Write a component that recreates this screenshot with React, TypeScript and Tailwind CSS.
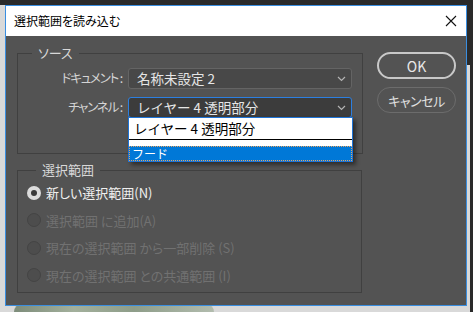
const jp = "font-['Noto_Sans_CJK_JP','Noto_Sans',sans-serif]";
const palt = "[font-feature-settings:'palt']";

function Chevron() {
  return (
    <svg width="9" height="6" viewBox="0 0 9 6" fill="none">
      <path d="M1 1l3.5 3.5L8 1" stroke="#b4b4b4" strokeWidth="1.2" />
    </svg>
  );
}

function Select({ value, focused }: { value: string; focused?: boolean }) {
  return (
    <div
      className={`flex h-[21px] w-[224px] items-center justify-between rounded-[3px] border pl-[8px] pr-[5px] ${
        focused ? 'border-[#2c7fe0] bg-[#3c3c3c]' : 'border-[#646464] bg-[#484848]'
      }`}
    >
      <span className="text-[13.5px] leading-none text-[#e6e6e6]">{value}</span>
      <Chevron />
    </div>
  );
}

function Radio({ label, checked, disabled }: { label: string; checked?: boolean; disabled?: boolean }) {
  return (
    <div className="flex h-[27.5px] items-center gap-[5px]">
      {checked ? (
        <span className="flex h-[14px] w-[14px] items-center justify-center rounded-full bg-[#dcdcdc]">
          <span className="h-[6px] w-[6px] rounded-full bg-[#3a3a3a]" />
        </span>
      ) : (
        <span className="h-[14px] w-[14px] rounded-full border border-[#444444] bg-[#4d4d4d]" />
      )}
      <span className={`text-[13px] leading-none ${palt} ${disabled ? 'text-[#717171]' : 'text-[#f0f0f0]'}`}>{label}</span>
    </div>
  );
}

function FieldLabel({ text }: { text: string }) {
  return (
    <span className={`w-[104px] text-right text-[12.5px] leading-none tracking-[-1.2px] text-[#d4d4d4] ${palt}`}>
      {text}
    </span>
  );
}

export default function App() {
  return (
    <div className={`relative h-[312px] w-[473px] overflow-hidden bg-[#d9d9d9] ${jp}`}>
      <div className="h-[5px] w-full bg-[#2a2a2a]" />
      <div className="absolute right-0 top-0 h-full w-[3px] bg-[#2a2a2a]" />
      <div className="absolute right-0 top-0 h-[65px] w-[6px] bg-[#2a2a2a]" />
      <div className="absolute bottom-0 left-[14px] h-[8px] w-[200px] rounded-t-[40px] bg-[linear-gradient(90deg,#7d8c7a,#a3b09c_30%,#8e9d89_60%,#b2bcae)]" />

      {/* dialog window */}
      <div className="absolute left-[5px] top-[5px] flex h-[301px] w-[462px] flex-col border border-[#3a8ee0] bg-[#535353]">
        <div className="flex h-[30px] shrink-0 items-center justify-between bg-white pl-[8px] pr-[8px]">
          <span className={`text-[12px] leading-none text-black ${palt}`}>選択範囲を読み込む</span>
          <svg width="12" height="12" viewBox="0 0 12 12" className="mr-[1px]">
            <path d="M1 1l10 10M11 1L1 11" stroke="#111" strokeWidth="1.1" />
          </svg>
        </div>

        <div className="flex flex-1 pl-[11px]">
          <div className="flex w-[345px] flex-col pt-[8px]">
            <fieldset className="border border-[#404040] pb-[35px] pr-[10px] pt-[6px]">
              <legend className={`ml-[14px] h-[18px] px-[6px] text-[13px] leading-[18px] text-[#d8d8d8] ${palt}`}>ソース</legend>
              <div className="flex flex-col gap-[8px]">
                <div className="flex items-center gap-[6px]">
                  <FieldLabel text="ドキュメント :" />
                  <Select value="名称未設定 2" />
                </div>
                <div className="flex items-center gap-[6px]">
                  <FieldLabel text="チャンネル :" />
                  <div className="relative">
                    <Select value="レイヤー 4 透明部分" focused />
                    <div className="absolute left-0 top-[20px] z-10 w-[225px] border border-[#1f74d6] bg-white shadow-[3px_3px_4px_rgba(0,0,0,0.45)]">
                      <div className="flex h-[21px] items-center pl-[5px] text-[13.5px] leading-none text-black">
                        レイヤー 4 透明部分
                      </div>
                      <div className="h-[1px] bg-black" />
                      <div className="h-[6px]" />
                      <div className="flex h-[15px] items-center border border-dotted border-[#e9a35f] bg-[#0078d7] pl-[2px] text-[12px] leading-none text-white">
                        フード
                      </div>
                    </div>
                  </div>
                </div>
              </div>
            </fieldset>

            <fieldset className="mt-[7px] border border-[#404040] pb-[3px] pl-[9px]">
              <legend className={`ml-[9px] h-[18px] px-[6px] text-[13px] leading-[18px] text-[#d8d8d8] ${palt}`}>選択範囲</legend>
              <Radio label="新しい選択範囲(N)" checked />
              <Radio label="選択範囲 に追加(A)" disabled />
              <Radio label="現在の選択範囲 から一部削除 (S)" disabled />
              <Radio label="現在の選択範囲 との共通範囲 (I)" disabled />
            </fieldset>
          </div>

          <div className="ml-[15px] flex flex-col gap-[8px] pt-[16px]">
            <button className="flex h-[27px] w-[79px] items-center justify-center rounded-full border-2 border-[#c8c8c8] text-[14px] leading-none text-[#e8e8e8]">
              OK
            </button>
            <button className={`flex h-[26px] w-[79px] items-center justify-center rounded-full border border-[#6c6c6c] text-[13px] leading-none tracking-[-0.5px] text-[#e0e0e0] ${palt}`}>
              キャンセル
            </button>
          </div>
        </div>
      </div>
    </div>
  );
}
